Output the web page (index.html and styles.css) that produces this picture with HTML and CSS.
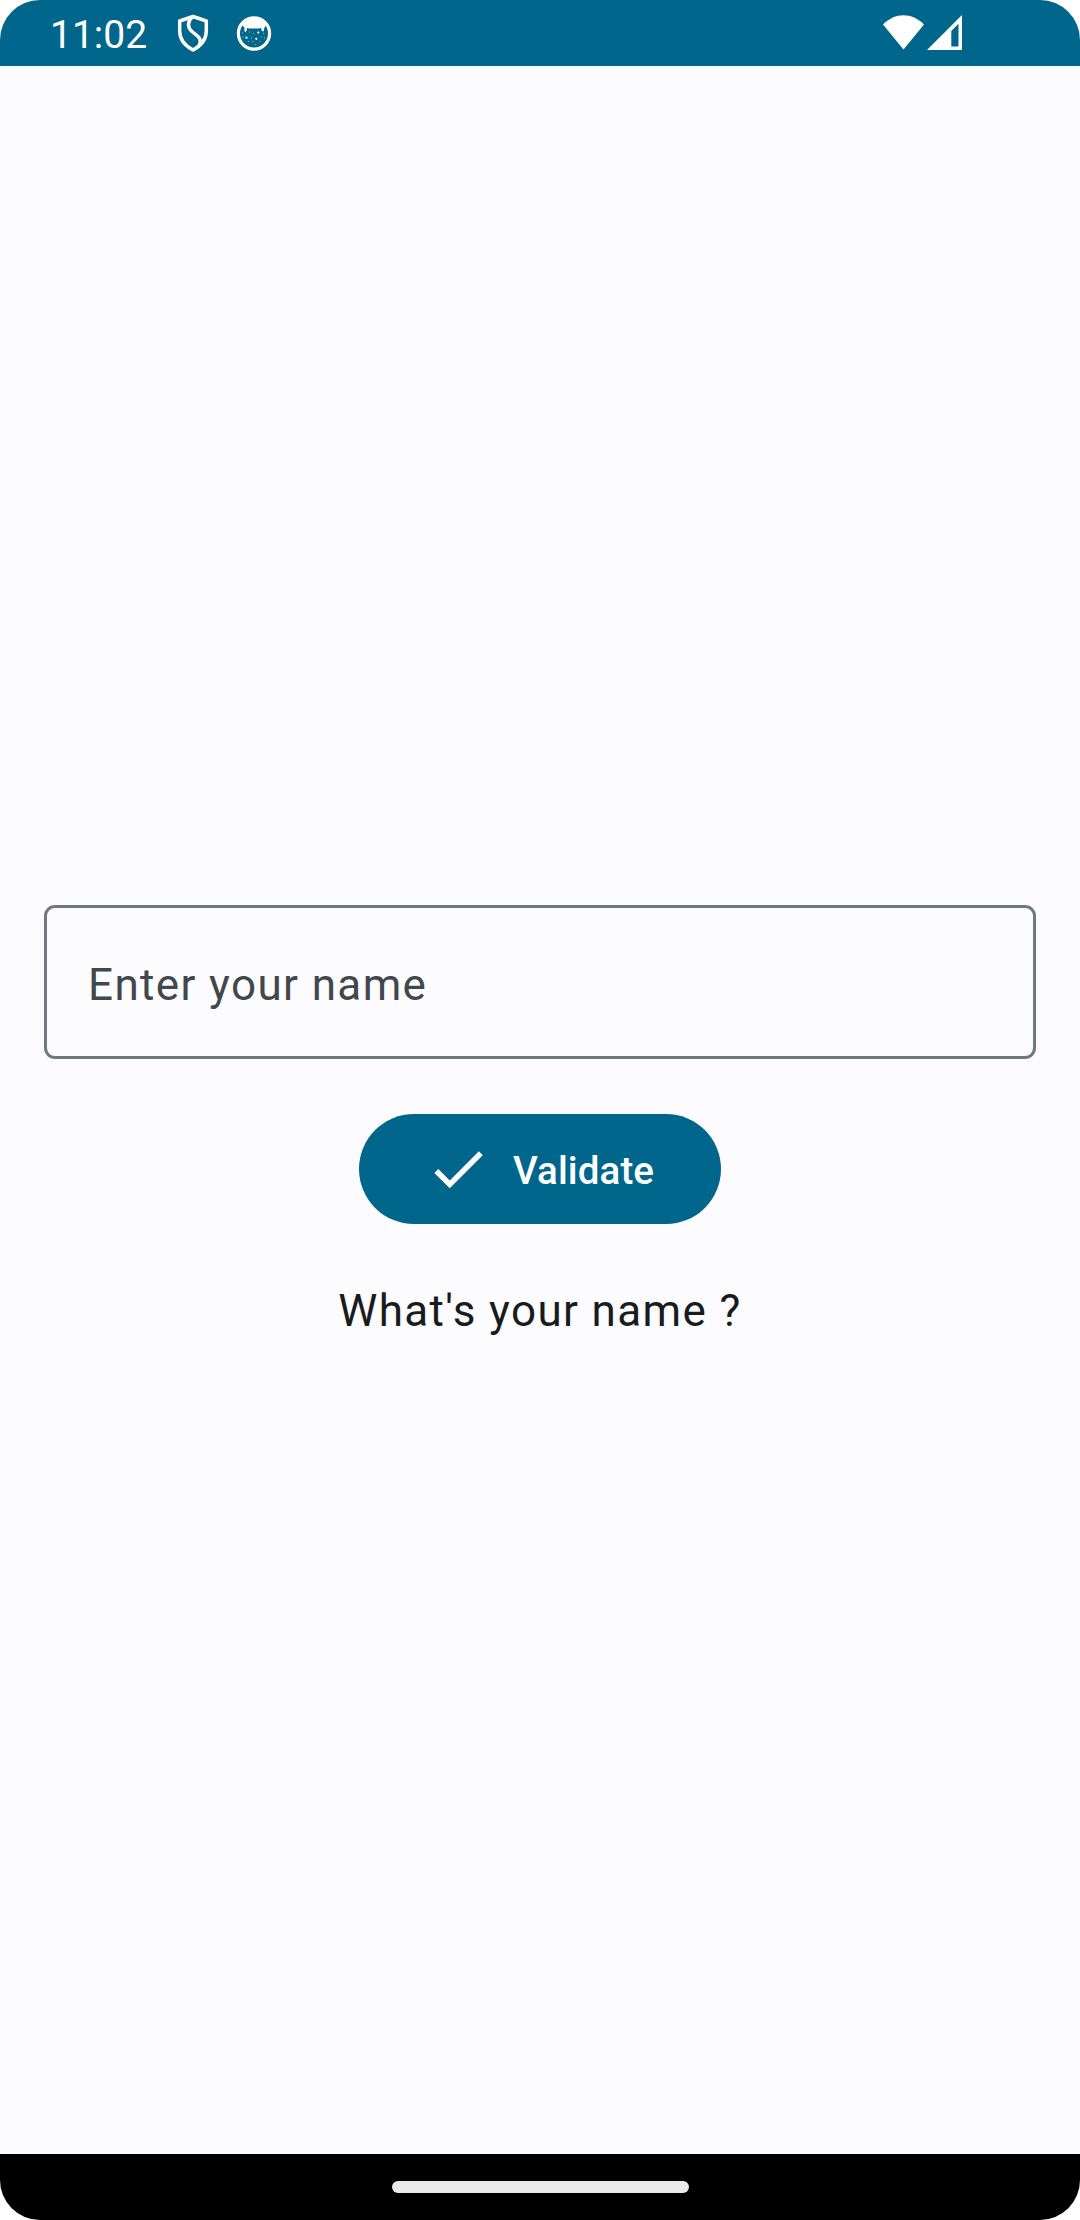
FILE: index.html
```html
<!DOCTYPE html>
<html lang="en">
<head>
<meta charset="utf-8">
<title>What's your name ?</title>
<link rel="stylesheet" href="styles.css">
</head>
<body>
<div class="screen">
  <header class="status-bar">
    <span class="clock">11:02</span>
    <svg class="shield" viewBox="0 0 32 40" fill="none" stroke="#fff" stroke-width="3.5" stroke-linejoin="round">
      <path d="M16 3.500 29.300 8V18C29.300 26 24.500 32.500 16 37 7.500 32.500 2.700 26 2.700 18V8Z"/>
      <path d="M15.500 4C10 8.500 10.500 14.500 15 18.500L20.500 23C24.500 26.500 24 31 20.500 34.500"/>
    </svg>
    <svg class="face" viewBox="0 0 36 36">
      <circle cx="18" cy="18.500" r="15.600" fill="none" stroke="#fff" stroke-width="3.200"/>
      <path fill="#fff" d="M5 9.500C8 5 12.500 2 18 2S28 5 31 9.500L28.500 12.500 27.500 16.500 25.800 16 25 12.700 23.200 13.400H12.800L11.200 12.700 10.600 15.500 9.700 17.200 8.300 16 8.500 12.500Z"/>
      <g fill="#fff">
        <circle cx="22.300" cy="17.500" r="1.100"/><circle cx="10.500" cy="22.700" r="1.100"/><circle cx="20.300" cy="23.800" r="1.100"/>
      </g>
      <g fill="#fff" opacity=".45">
        <circle cx="6.500" cy="18" r=".7"/><circle cx="13.500" cy="17" r=".7"/><circle cx="17.500" cy="18.600" r=".7"/><circle cx="27.500" cy="18.500" r=".7"/><circle cx="7" cy="22" r=".7"/><circle cx="15.500" cy="22.700" r=".7"/><circle cx="25" cy="22" r=".7"/><circle cx="28.500" cy="23" r=".7"/><circle cx="12.500" cy="26.500" r=".7"/><circle cx="16.700" cy="26.500" r=".7"/><circle cx="24" cy="26.500" r=".7"/><circle cx="19.500" cy="29.500" r=".8"/>
      </g>
    </svg>
    <svg class="wifi" viewBox="0 0 41 35"><path fill="#fff" d="M0 9.500C12-2.900 29-2.900 41 9.500L20.500 34.500Z"/></svg>
    <svg class="signal" viewBox="0 0 35 35"><path fill="#fff" fill-rule="evenodd" d="M0 35 35 0V35ZM24.300 16V31.500H31.500V8.800Z"/></svg>
  </header>
  <main class="content">
    <div class="field"><span class="field-label">Enter your name</span></div>
    <button class="validate" type="button">
      <svg class="check" viewBox="0 0 24 24"><path fill="#fff" d="M9 16.170 4.830 12 3.410 13.410 9 19 21 7 19.590 5.590Z"/></svg>
      <span class="validate-label">Validate</span>
    </button>
    <p class="message">What's your name ?</p>
  </main>
  <footer class="nav-bar"><div class="handle"></div></footer>
</div>
</body>
</html>
```
FILE: styles.css
```css
* { box-sizing: border-box; }

body {
  margin: 0;
  background: #fff;
  font-family: Roboto, sans-serif;
}

.screen {
  display: flex;
  flex-direction: column;
  width: 1080px;
  height: 2220px;
  overflow: hidden;
  border-radius: 40px;
  background: #fcfcff;
}

.status-bar {
  display: flex;
  flex: none;
  align-items: flex-start;
  height: 66px;
  padding: 14px 118px 0 50px;
  background: #00668b;
  color: #fff;
}

.clock {
  width: 127px;
  margin-top: -3px;
  font-size: 39px;
  line-height: 48px;
}

.shield { width: 32px; height: 40px; margin-top: -1px; }
.face { width: 36px; height: 36px; margin: 1px 0 0 27px; }
.wifi { width: 41px; height: 35px; margin: 1px 3px 0 auto; }
.signal { width: 35px; height: 35px; margin-top: 1px; }

.content {
  display: flex;
  flex: 1;
  flex-direction: column;
  align-items: center;
  padding: 839px 44px 0;
}

.field {
  display: flex;
  align-items: center;
  align-self: stretch;
  height: 154px;
  padding: 6px 41px 0;
  border: 3px solid #70787e;
  border-radius: 11px;
  color: #41484d;
}

.field-label,
.message {
  font-size: 44px;
  line-height: 66px;
  letter-spacing: 1.375px;
}

.validate {
  display: flex;
  align-items: center;
  gap: 22px;
  width: 362px;
  height: 110px;
  margin: 55px 0 54px;
  padding: 0 66px;
  border: 0;
  border-radius: 55px;
  background: #00668b;
  color: #fff;
  font: 500 38.5px/55px Roboto, sans-serif;
  letter-spacing: 0.1px;
}

.validate-label { padding-top: 2px; }

.check { flex: none; width: 66px; height: 66px; }

.message {
  margin: 0;
  color: #191c1e;
}

.nav-bar {
  display: flex;
  flex: none;
  align-items: center;
  justify-content: center;
  height: 66px;
  background: #000;
}

.handle {
  width: 297px;
  height: 12px;
  border-radius: 6px;
  background: #ebebeb;
}
```
